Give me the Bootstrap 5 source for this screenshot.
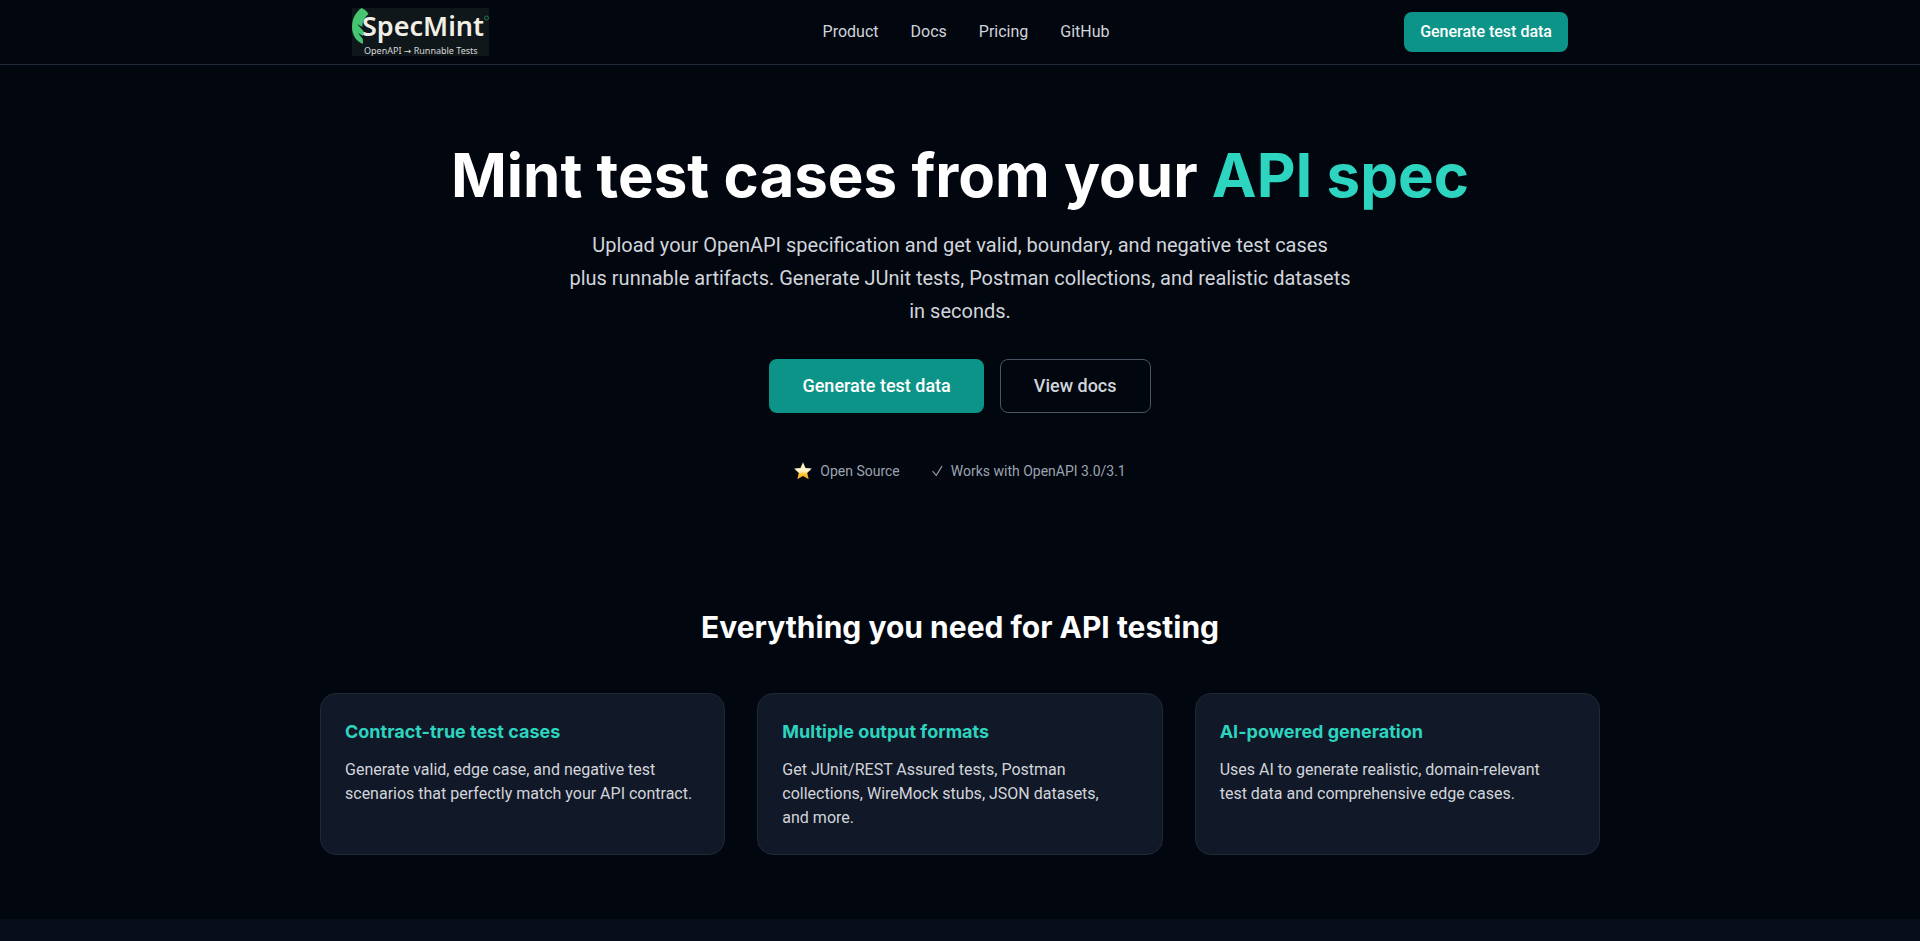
<!DOCTYPE html>
<html lang="en">
<head>
<meta charset="utf-8">
<meta name="viewport" content="width=device-width, initial-scale=1">
<title>SpecMint</title>
<link rel="stylesheet" href="https://cdn.jsdelivr.net/npm/bootstrap@5.3.0/dist/css/bootstrap.min.css">
<style>
body{background:#02060f;color:#d1d5db;font-family:Roboto,"Liberation Sans",sans-serif;font-size:16px;line-height:24px}
.wrap{max-width:1280px}
.site-head{border-bottom:1px solid #1f2937}
.head-row{min-height:64px;padding-left:32px;padding-right:32px}
.brand{min-width:176px}
.site-nav{gap:32px}
.site-nav a{color:#d1d5db}
.btn{--bs-btn-border-radius:8px;--bs-btn-font-size:16px;--bs-btn-line-height:24px;--bs-btn-font-weight:500}
.btn-mint{--bs-btn-bg:#0d9488;--bs-btn-color:#fff;--bs-btn-hover-bg:#0f766e;--bs-btn-hover-color:#fff;border:0}
.btn-ghost{--bs-btn-color:#d1d5db;--bs-btn-border-color:#4b5563;--bs-btn-hover-color:#fff;--bs-btn-hover-border-color:#9ca3af}
.btn-hero{--bs-btn-font-size:18px;--bs-btn-line-height:28px;--bs-btn-padding-x:33px;--bs-btn-padding-y:12px}
.hero{padding-top:80px;padding-bottom:64px}
h1,h2,h3{color:#fff;font-family:Inter,"Liberation Sans",sans-serif;font-weight:700}
h1{font-size:60px;line-height:60px}
h2{font-size:30px;line-height:36px}
h3{font-size:18px;line-height:28px}
.mint{color:#2dd4bf}
.pitch{max-width:800px;font-size:20px;line-height:33px;margin-bottom:31px}
.facts{gap:32px;font-size:14px;line-height:20px;color:#9ca3af}
.features{max-width:1312px;padding-top:64px;padding-bottom:64px}
.feature{background:#111827;border:1px solid #1f2937;border-radius:16px;--bs-card-color:#d1d5db}
.feature h3{margin-bottom:12px}
.band{background:#070d19;min-height:22px}
</style>
</head>
<body>
<header class="site-head">
  <div class="wrap head-row mx-auto d-flex align-items-center justify-content-between">
    <a class="brand" href="#" aria-label="SpecMint home">
      <svg class="d-block" width="137" height="48" viewBox="0 0 137 48">
        <rect width="137" height="48" fill="#10171b"/>
        <path d="M9.500 0C4 4 0 10 0 19C0 27 4 33 11 36L10.800 31L6 25L11 28L11.500 23L5 16L10.500 19C10 14 13 9 16.500 6C15 3 12 1 9.500 0Z" fill="#45c472"/>
        <text x="10" y="28" font-family="Noto Sans" font-weight="600" font-size="27" fill="#f1efe6">SpecMint</text>
        <text x="12" y="46" font-family="Noto Sans" font-size="9" fill="#d5d8d5">OpenAPI <tspan font-family="DejaVu Sans">→</tspan> Runnable Tests</text>
        <circle cx="134.500" cy="10" r="2" fill="none" stroke="#26784a"/>
      </svg>
    </a>
    <nav class="site-nav d-flex">
      <a class="text-decoration-none" href="#product">Product</a>
      <a class="text-decoration-none" href="#docs">Docs</a>
      <a class="text-decoration-none" href="#pricing">Pricing</a>
      <a class="text-decoration-none" href="#github">GitHub</a>
    </nav>
    <button type="button" class="btn btn-mint px-3 py-2">Generate test data</button>
  </div>
</header>
<main>
  <section class="hero text-center px-3">
    <h1 class="mb-4">Mint test cases from your <span class="mint">API spec</span></h1>
    <p class="pitch mx-auto">Upload your OpenAPI specification and get valid, boundary, and negative test cases <br class="d-none d-lg-inline">plus runnable artifacts. Generate JUnit tests, Postman collections, and realistic datasets <br class="d-none d-lg-inline">in seconds.</p>
    <div class="d-flex justify-content-center gap-3 mb-5">
      <button type="button" class="btn btn-mint btn-hero">Generate test data</button>
      <button type="button" class="btn btn-ghost btn-hero">View docs</button>
    </div>
    <div class="facts d-flex justify-content-center">
      <span class="d-flex align-items-center gap-2">
        <svg width="18" height="18" viewBox="0 0 18 18" aria-hidden="true">
          <defs><linearGradient id="gold" x1="0" y1="0" x2="0" y2="1"><stop offset="0" stop-color="#ffe9a8"/><stop offset=".5" stop-color="#fff6cf"/><stop offset=".7" stop-color="#fbc531"/><stop offset="1" stop-color="#f0a31c"/></linearGradient></defs>
          <path d="M9 .3L11.500 6L17.800 6.600L13.200 10.900L14.700 17.300L9 14L3.300 17.300L4.800 10.900L.2 6.600L6.500 6Z" fill="url(#gold)"/>
        </svg>
        Open Source
      </span>
      <span class="d-flex align-items-center gap-2">
        <svg width="11" height="12" viewBox="0 0 11 12" aria-hidden="true"><path d="M1 6.500L4.200 10.500L9.800 1.500" fill="none" stroke="#9ca3af" stroke-width="1.200" stroke-linecap="round" stroke-linejoin="round"/></svg>
        Works with OpenAPI 3.0/3.1
      </span>
    </div>
  </section>
  <section class="features mx-auto">
    <h2 class="text-center mb-5">Everything you need for API testing</h2>
    <div class="row row-cols-1 row-cols-md-3 mx-0 gy-3 gy-md-0">
      <div class="col px-3"><article class="card feature h-100"><div class="card-body p-4">
        <h3 class="mint">Contract-true test cases</h3>
        <p class="mb-0">Generate valid, edge case, and negative test scenarios that perfectly match your API contract.</p>
      </div></article></div>
      <div class="col px-3"><article class="card feature h-100"><div class="card-body p-4">
        <h3 class="mint">Multiple output formats</h3>
        <p class="mb-0">Get JUnit/REST Assured tests, Postman collections, WireMock stubs, JSON datasets, and&nbsp;more.</p>
      </div></article></div>
      <div class="col px-3"><article class="card feature h-100"><div class="card-body p-4">
        <h3 class="mint">AI-powered generation</h3>
        <p class="mb-0">Uses AI to generate realistic, domain-relevant test&nbsp;data and comprehensive edge cases.</p>
      </div></article></div>
    </div>
  </section>
  <div class="band"></div>
</main>
<script src="https://cdn.jsdelivr.net/npm/bootstrap@5.3.0/dist/js/bootstrap.bundle.min.js"></script>
</body>
</html>
